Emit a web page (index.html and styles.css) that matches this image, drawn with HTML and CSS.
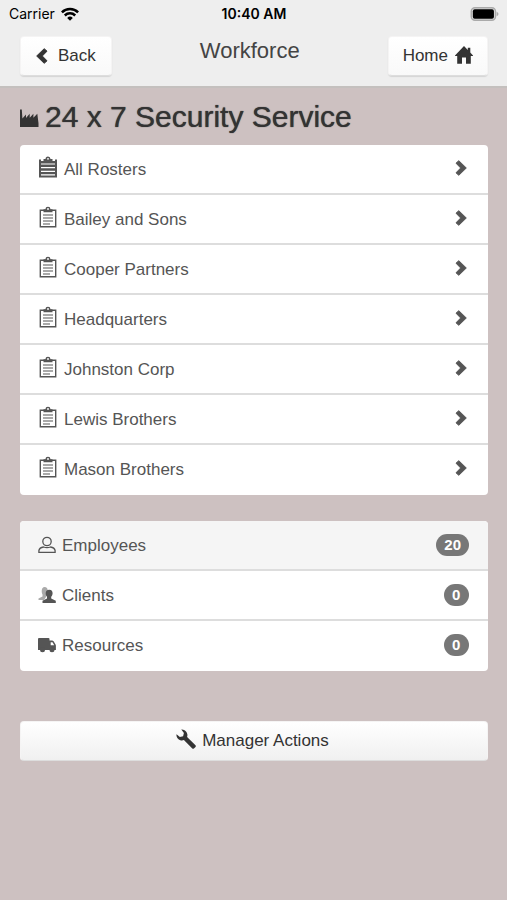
FILE: index.html
```html
<!DOCTYPE html>
<html lang="en">
<head>
<meta charset="utf-8">
<meta name="viewport" content="width=device-width, initial-scale=1">
<title>Workforce</title>
<link rel="stylesheet" href="styles.css">
</head>
<body>
<svg class="sprite" aria-hidden="true">
  <symbol id="board" viewBox="0 0 18 22">
    <path d="M1.300 4.300h15.400v16.400H1.300z" fill="none" stroke="currentColor" stroke-width="1.400"/>
    <path d="M4.500 6.300V3.300H6.500a2.500 2.500 0 0 1 5 0h2v3z" fill="currentColor"/>
    <circle cx="9" cy="3" r="0.900" fill="#fff"/>
    <path d="M4 9h10M4 12h10M4 15h10M4 18h7" stroke="currentColor" stroke-width="1.200"/>
  </symbol>
  <symbol id="board-solid" viewBox="0 0 18 22">
    <path d="M0 3.500h2V5h14V3.500h2V21.500H0z" fill="currentColor"/>
    <path d="M4.500 5V3H6.500a2.500 2.500 0 0 1 5 0h2V5z" fill="currentColor"/>
    <circle cx="9" cy="2.800" r="0.900" fill="#fff"/>
    <path d="M2 8h14M2 11.700h14M2 15.300h14M2 18.900h14" stroke="#fff" stroke-width="1.200"/>
  </symbol>
  <symbol id="chevron" viewBox="0 0 12 16">
    <path d="M1 3.200 3.800 0.700 11.300 8l-7.500 7.300L1 12.800 5.700 8z" fill="currentColor" stroke="currentColor" stroke-width="1" stroke-linejoin="round"/>
  </symbol>
</svg>

<header class="top">
  <div class="status">
    <span class="carrier">Carrier
      <svg class="wifi" viewBox="0 0 18 14" aria-hidden="true"><g fill="none" stroke="#000" stroke-width="2.500"><path d="M0.900 5.300a11.500 11.500 0 0 1 16.200 0"/><path d="M3.800 8.500a7.400 7.400 0 0 1 10.400 0"/></g><path d="M9 13.800 6.200 10.900a4 4 0 0 1 5.600 0z"/></svg>
    </span>
    <span class="time">10:40 AM</span>
    <svg class="battery" viewBox="0 0 30 15" aria-hidden="true"><rect x="0.800" y="0.800" width="26" height="13.400" rx="4" fill="#ddd" stroke="#aaa" stroke-width="1.500"/><rect x="2.500" y="2.500" width="22.600" height="10" rx="2" fill="#000"/><path d="M28 5q2 1 2 2.500T28 10z" fill="#aaa"/></svg>
  </div>
  <nav class="bar">
    <button class="btn" type="button"><svg class="back-icon" viewBox="0 0 12 16" aria-hidden="true"><path d="M11 3.200 8.200 0.700 0.700 8l7.500 7.300 2.800-2.500L6.300 8z" fill="currentColor" stroke="currentColor" stroke-width="1" stroke-linejoin="round"/></svg>Back</button>
    <h1 class="title">Workforce</h1>
    <button class="btn home" type="button">Home<svg class="home-icon" viewBox="0 0 18 18" aria-hidden="true"><path d="M9 0 12.800 3.900V1.700h2.500v4.800L18 9.500V10H15.800V17.700H11V11.500H7V17.700H2.200V10H0V9.400z" fill="currentColor"/></svg></button>
  </nav>
</header>

<main class="page">
  <h2 class="company"><svg class="factory" viewBox="0 0 19 18" aria-hidden="true"><path d="M0 18V0.500h1.800l0.600 9L6 5.500v3.500L9.700 4.700v4L13.400 4.700v4L17.300 4.700l1.200 9.500V18z" fill="currentColor"/></svg>24 x 7 Security Service</h2>

  <ul class="list">
    <li><a href="#all"><svg class="board" aria-hidden="true"><use href="#board-solid"/></svg>All Rosters<svg class="chevron" aria-hidden="true"><use href="#chevron"/></svg></a></li>
    <li><a href="#bailey"><svg class="board open" aria-hidden="true"><use href="#board"/></svg>Bailey and Sons<svg class="chevron" aria-hidden="true"><use href="#chevron"/></svg></a></li>
    <li><a href="#cooper"><svg class="board open" aria-hidden="true"><use href="#board"/></svg>Cooper Partners<svg class="chevron" aria-hidden="true"><use href="#chevron"/></svg></a></li>
    <li><a href="#headquarters"><svg class="board open" aria-hidden="true"><use href="#board"/></svg>Headquarters<svg class="chevron" aria-hidden="true"><use href="#chevron"/></svg></a></li>
    <li><a href="#johnston"><svg class="board open" aria-hidden="true"><use href="#board"/></svg>Johnston Corp<svg class="chevron" aria-hidden="true"><use href="#chevron"/></svg></a></li>
    <li><a href="#lewis"><svg class="board open" aria-hidden="true"><use href="#board"/></svg>Lewis Brothers<svg class="chevron" aria-hidden="true"><use href="#chevron"/></svg></a></li>
    <li><a href="#mason"><svg class="board open" aria-hidden="true"><use href="#board"/></svg>Mason Brothers<svg class="chevron" aria-hidden="true"><use href="#chevron"/></svg></a></li>
  </ul>

  <ul class="list">
    <li class="active"><a href="#employees"><svg class="kind" viewBox="0 0 18 18" aria-hidden="true"><g fill="none" stroke="currentColor" stroke-width="1.300"><circle cx="9" cy="5.500" r="4.200"/><path d="M0.900 16.300V14.500Q1.500 11.600 5.500 11q3.500 1.300 7 0q4 0.600 4.600 3.500v1.800z"/></g></svg>Employees<span class="badge">20</span></a></li>
    <li><a href="#clients"><svg class="kind" viewBox="0 0 18 18" aria-hidden="true"><path d="M6.500 1c2.200 0 3.200 1.300 3.200 3.200L8 9v2l-2 3H0.500v-1.500L4.500 10.500V8.500C3.300 6.500 3.200 1 6.500 1z" fill="#aaa"/><path d="M11.200 3.800c2.500 0 3.500 1.500 3.400 3.600-0.100 1.600-0.800 2.800-1.400 3.400v1.700l4.600 2.200v2.200H4.500v-2.200L9 12.500v-1.700C8.300 10 7.700 8.900 7.700 7.400 7.600 5.300 8.800 3.800 11.200 3.800z" fill="currentColor"/></svg>Clients<span class="badge">0</span></a></li>
    <li><a href="#resources"><svg class="kind" viewBox="0 0 18 18" aria-hidden="true"><path d="M1 2h9.500a1 1 0 0 1 1 1V4.500h2.500q1 0 1.600 0.800l1.800 3q0.500 0.600 0.500 1.400V14H0V3a1 1 0 0 1 1-1z" fill="currentColor"/><path d="M12.700 6.200h1.800l1.700 3h-3.500z" fill="#fff"/><circle cx="4.500" cy="13.800" r="2.500" fill="currentColor"/><circle cx="14" cy="13.800" r="2.500" fill="currentColor"/></svg>Resources<span class="badge">0</span></a></li>
  </ul>

  <button class="btn wide" type="button"><svg class="wrench" viewBox="0 0 20 20" aria-hidden="true"><path d="M5.300 0.600A5.500 5.500 0 0 1 11.100 7.900L19.500 16.300a1.200 1.200 0 0 1 0 1.600L17.900 19.500a1.200 1.200 0 0 1-1.600 0L7.900 11.100A5.500 5.500 0 0 1 0.500 5.200L3.900 8 7.100 7.300 7.900 4z" fill="currentColor"/></svg>Manager Actions</button>
</main>
</body>
</html>
```
FILE: styles.css
```css
* {
  box-sizing: border-box;
}

body {
  margin: 0;
  min-height: 100vh;
  background: #cdc1c1;
  color: #333;
  font-family: "Liberation Sans", Arial, sans-serif;
  font-size: 17px;
  line-height: 20px;
}

.sprite {
  display: none;
}

.top {
  background: #eee;
  border-bottom: 2px solid #c4c0be;
}

.status {
  display: grid;
  grid-template-columns: 1fr auto 1fr;
  align-items: center;
  padding: 4px 8px 4px 9px;
  color: #000;
  font-family: Inter, sans-serif;
  font-size: 14px;
}

.carrier {
  display: flex;
  align-items: center;
  gap: 6px;
}

.wifi {
  width: 18px;
  height: 14px;
}

.time {
  font-weight: 600;
}

.battery {
  justify-self: end;
  width: 29px;
  height: 14px;
}

.bar {
  display: flex;
  align-items: flex-start;
  justify-content: space-between;
  padding: 8px 19px 10px 20px;
}

.btn {
  display: flex;
  align-items: center;
  justify-content: center;
  height: 40px;
  padding: 0 15px;
  border: 1px solid #f5f4f4;
  border-bottom-color: #ddd;
  border-radius: 4px;
  background: linear-gradient(#fff, #f9f9f9);
  box-shadow: 0 1px 1px #d4d4d4;
  color: #333;
  font: inherit;
}

.home {
  padding: 0 14px;
}

.back-icon {
  width: 12px;
  height: 16px;
  margin-right: 10px;
}

.home-icon {
  width: 18px;
  height: 18px;
  margin: 0 0 3px 7px;
}

.title {
  margin: 2px 0 0;
  color: #444;
  font-size: 22px;
  font-weight: 400;
  line-height: 26px;
}

.page {
  padding: 12px 19px 20px 20px;
}

.company {
  display: flex;
  align-items: baseline;
  gap: 6px;
  margin: 0 0 11px;
  font-size: 30px;
  font-weight: 400;
  line-height: 34px;
  text-shadow: 0 0 1px #333;
}

.factory {
  width: 19px;
  height: 18px;
}

.list {
  margin: 0 0 26px;
  padding: 0;
  overflow: hidden;
  border-radius: 4px;
  background: #fff;
  list-style: none;
}

.list li {
  height: 50px;
  border-bottom: 2px solid #ddd;
}

.list li:last-child {
  border-bottom: 0;
}

.list a {
  display: flex;
  align-items: center;
  height: 50px;
  padding: 0 19px 0 18px;
  color: #555;
  text-decoration: none;
}

.list .active {
  background: #f5f5f5;
}

.board {
  width: 20px;
  height: 22px;
  margin: 0 6px 6px 0;
}

.open {
  padding: 0 1px;
}

.chevron {
  width: 12px;
  height: 16px;
  margin: 0 2px 4px auto;
}

.kind {
  width: 18px;
  height: 18px;
  margin: 0 6px 2px 0;
}

.badge {
  min-width: 25px;
  margin: 0 0 3px auto;
  padding: 1px 8px;
  border-radius: 12px;
  background: #777;
  color: #fff;
  font-size: 15px;
  font-weight: 700;
}

.wide {
  width: 100%;
  margin-top: 50px;
  padding: 0 18px 0 15px;
  background: linear-gradient(#fff, #f0f0f0);
  box-shadow: none;
}

.wrench {
  width: 20px;
  height: 20px;
  margin: 0 6px 4px 0;
}
```
